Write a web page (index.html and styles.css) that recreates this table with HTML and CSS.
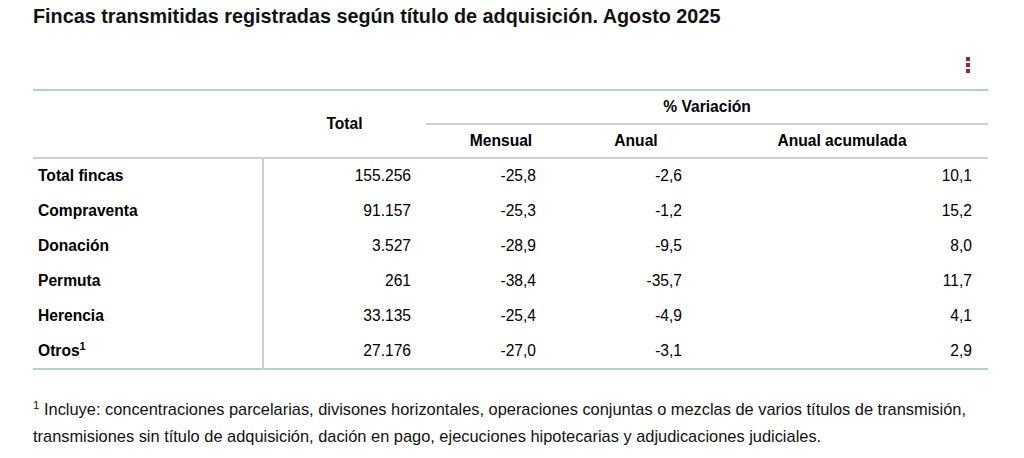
FILE: index.html
```html
<!DOCTYPE html>
<html lang="es">
<head>
<meta charset="utf-8">
<link rel="stylesheet" href="styles.css">
</head>
<body>
<div class="page">
  <h1 class="title">Fincas transmitidas registradas según título de adquisición. Agosto 2025</h1>
  <div class="toolbar">
    <span class="menu" aria-label="menú"><i></i><i></i><i></i></span>
  </div>
  <table class="data">
    <colgroup>
      <col class="c-label"><col class="c-total"><col class="c-men"><col class="c-anu"><col class="c-acu">
    </colgroup>
    <thead>
      <tr class="h1row">
        <th></th>
        <th rowspan="2" class="h-total">Total</th>
        <th colspan="3" class="h-var">% Variación</th>
      </tr>
      <tr class="h2row">
        <th></th>
        <th>Mensual</th>
        <th>Anual</th>
        <th>Anual acumulada</th>
      </tr>
    </thead>
    <tbody>
      <tr><th>Total fincas</th><td class="n-total">155.256</td><td class="n-men">-25,8</td><td class="n-anu">-2,6</td><td class="n-acu">10,1</td></tr>
      <tr><th>Compraventa</th><td class="n-total">91.157</td><td class="n-men">-25,3</td><td class="n-anu">-1,2</td><td class="n-acu">15,2</td></tr>
      <tr><th>Donación</th><td class="n-total">3.527</td><td class="n-men">-28,9</td><td class="n-anu">-9,5</td><td class="n-acu">8,0</td></tr>
      <tr><th>Permuta</th><td class="n-total">261</td><td class="n-men">-38,4</td><td class="n-anu">-35,7</td><td class="n-acu">11,7</td></tr>
      <tr><th>Herencia</th><td class="n-total">33.135</td><td class="n-men">-25,4</td><td class="n-anu">-4,9</td><td class="n-acu">4,1</td></tr>
      <tr class="last"><th>Otros<sup>1</sup></th><td class="n-total">27.176</td><td class="n-men">-27,0</td><td class="n-anu">-3,1</td><td class="n-acu">2,9</td></tr>
    </tbody>
  </table>
  <p class="note"><sup>1</sup> Incluye: concentraciones parcelarias, divisones horizontales, operaciones conjuntas o mezclas de varios títulos de transmisión, transmisiones sin título de adquisición, dación en pago, ejecuciones hipotecarias y adjudicaciones judiciales.</p>
</div>
</body>
</html>
```
FILE: styles.css
```css
html, body {
  margin: 0;
  background: #fff;
}
body {
  font-family: "Liberation Sans", Arial, sans-serif;
  color: #000;
}
.page {
  width: 955px;
  padding: 5px 0 0 33px;
}
.title {
  margin: 0;
  font-size: 19.8px;
  line-height: 22px;
  font-weight: bold;
  color: #111;
}
.toolbar {
  display: flex;
  justify-content: flex-end;
  padding: 30px 18px 0 0;
  height: 32px;
}
.menu {
  display: flex;
  flex-direction: column;
  gap: 2px;
  width: 4px;
}
.menu i {
  display: block;
  width: 4px;
  height: 4px;
  background: #a4213d;
}
.data {
  width: 955px;
  border-collapse: collapse;
  table-layout: fixed;
  font-size: 15.6px;
}
.c-label { width: 230px; }
.c-total { width: 163px; }
.c-men { width: 150px; }
.c-anu { width: 120px; }
.c-acu { width: 292px; }
.data th, .data td {
  padding: 0;
}
.data thead th {
  font-weight: bold;
  text-align: center;
}
.h1row {
  border-top: 2px solid #a9d3ce;
  height: 34px;
}
.h1row th { vertical-align: middle; }
.h-var {
  border-bottom: 2px solid #cfcfcf;
}
.h-total { padding-top: 2px; }
.h2row {
  height: 34px;
  border-bottom: 2px solid #cfcfcf;
}
.data tbody tr {
  height: 35px;
}
.data tbody tr.last {
  height: 36px;
  border-bottom: 2px solid #a9d3ce;
}
.data tbody th {
  text-align: left;
  font-weight: bold;
  padding-left: 5px;
  border-right: 2px solid #cfcfcf;
}
.data td { text-align: right; }
.n-total { padding-right: 15px !important; }
.n-men { padding-right: 40px !important; }
.n-anu { padding-right: 14px !important; }
.n-acu { padding-right: 16px !important; }
.data sup {
  font-size: 11px;
  line-height: 0;
}
.note {
  margin: 26px 0 0;
  font-size: 16.4px;
  line-height: 27px;
  color: #111;
}
.note sup {
  font-size: 11.5px;
  line-height: 0;
}
```
